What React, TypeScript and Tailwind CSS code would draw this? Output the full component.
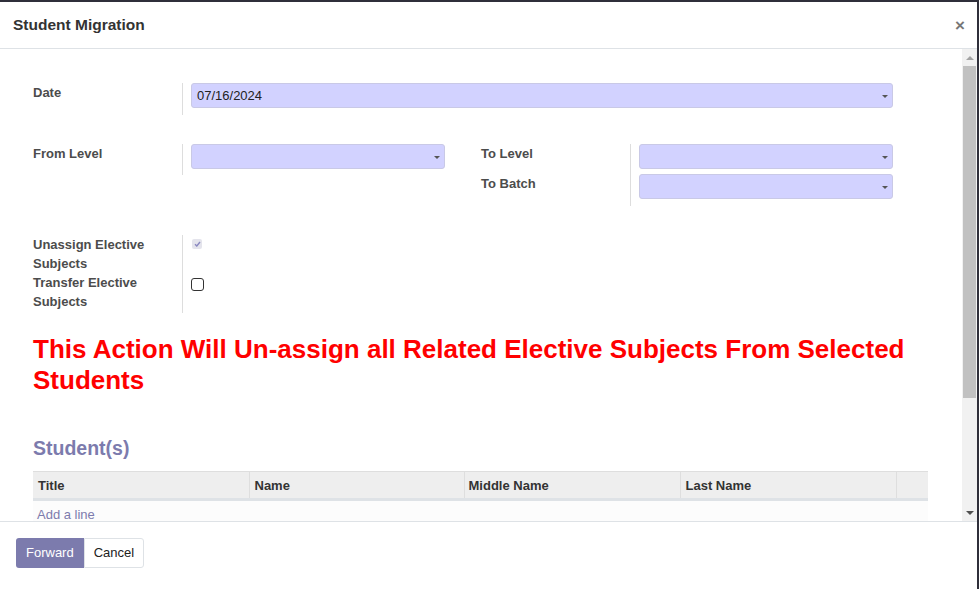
import type { ReactNode } from "react";

const font = { fontFamily: '"Liberation Sans", Arial, sans-serif' };

function Field({ children, width }: { children?: ReactNode; width: string }) {
  return (
    <div className={`relative flex h-[25px] items-center rounded-[3px] border border-[#c9c9e6] bg-[#d2d2ff] pl-[5px] text-[13px] text-[#222] ${width}`}>
      {children}
      <span className="absolute right-[4px] top-[11px] h-0 w-0 border-x-[3px] border-t-[3px] border-x-transparent border-t-[#555]" />
    </div>
  );
}

function Label({ children }: { children: ReactNode }) {
  return <div className="text-[13px] font-bold leading-[19px] text-[#4c4c4c]">{children}</div>;
}

export default function App() {
  return (
    <div className="h-[589px] w-[979px] overflow-hidden bg-[#2f2f3a]" style={font}>
      <div className="mt-[2px] flex h-[587px] w-[977px] flex-col bg-white">
        <header className="flex h-[47px] shrink-0 items-center justify-between border-b border-[#dee2e6] pl-[13px] pr-[12px]">
          <h1 className="text-[15.5px] font-bold text-[#333]">Student Migration</h1>
          <span className="text-[17px] font-bold leading-none text-[#777]">×</span>
        </header>

        <div className="flex min-h-0 flex-1">
          <div className="flex-1 overflow-hidden pl-[33px] pr-[49px] pt-[34px]">
            <div className="flex">
              <div className="w-[149px]">
                <Label>Date</Label>
              </div>
              <div className="flex h-[32px] border-l border-[#ddd] pl-[8px]">
                <Field width="w-[702px]">07/16/2024</Field>
              </div>
            </div>

            <div className="mt-[29px] flex">
              <div className="w-[149px]">
                <Label>From Level</Label>
              </div>
              <div className="h-[31px] w-[299px] border-l border-[#ddd] pl-[8px]">
                <Field width="w-[254px]" />
              </div>
              <div className="w-[149px]">
                <Label>To Level</Label>
                <div className="mt-[11px]">
                  <Label>To Batch</Label>
                </div>
              </div>
              <div className="flex h-[62px] flex-col gap-[5px] border-l border-[#ddd] pl-[8px]">
                <Field width="w-[254px]" />
                <Field width="w-[254px]" />
              </div>
            </div>

            <div className="mt-[29px] flex">
              <div className="w-[149px]">
                <Label>
                  Unassign Elective
                  <br />
                  Subjects
                </Label>
                <Label>
                  Transfer Elective
                  <br />
                  Subjects
                </Label>
              </div>
              <div className="h-[78px] border-l border-[#ddd] pl-[9px] pt-[4px]">
                <div className="flex h-[10px] w-[10px] items-center justify-center rounded-[2px] bg-[#e4e4ec]">
                  <svg width="7" height="6" viewBox="0 0 7 6">
                    <path d="M1 3.2 L2.8 5 L6 1" fill="none" stroke="#8a88c0" strokeWidth="1.4" />
                  </svg>
                </div>
                <div className="ml-[-1px] mt-[29px] h-[13px] w-[13px] rounded-[3px] border-[1.5px] border-[#333] bg-white" />
              </div>
            </div>

            <p className="mt-[21px] text-[26px] font-bold leading-[31px] text-[#ff0000]">
              This Action Will Un-assign all Related Elective Subjects From Selected Students
            </p>

            <h2 className="mt-[38px] text-[19.5px] font-bold text-[#7c7bad]">Student(s)</h2>

            <table className="mt-[8px] w-[895px] border-collapse text-[13px]">
              <thead>
                <tr className="h-[28px] border-t border-b-[3px] border-t-[#dedede] border-b-[#dee2e6] bg-[#eeeeee] text-left font-bold text-[#333]">
                  <th className="w-[216px] pl-[5px]">Title</th>
                  <th className="w-[215px] border-l border-[#dedede] pl-[5px]">Name</th>
                  <th className="w-[216px] border-l border-[#dedede] pl-[4px]">Middle Name</th>
                  <th className="w-[216px] border-l border-[#dedede] pl-[5px]">Last Name</th>
                  <th className="border-l border-[#dedede]" />
                </tr>
              </thead>
              <tbody>
                <tr className="h-[22px] bg-[#fcfcfc]">
                  <td colSpan={5} className="pl-[4px] pt-[4px] text-[#7c7bad]">
                    Add a line
                  </td>
                </tr>
              </tbody>
            </table>
          </div>

          <div className="flex w-[15px] shrink-0 flex-col bg-[#f1f1f1]">
            <div className="flex h-[17px] items-center justify-center">
              <span className="h-0 w-0 border-x-[4px] border-b-[4px] border-x-transparent border-b-[#a3a3a3]" />
            </div>
            <div className="mx-[1px] h-[332px] bg-[#c1c1c1]" />
            <div className="flex-1" />
            <div className="flex h-[17px] items-center justify-center">
              <span className="h-0 w-0 border-x-[4px] border-t-[4px] border-x-transparent border-t-[#505050]" />
            </div>
          </div>
        </div>

        <footer className="flex h-[68px] shrink-0 items-start border-t border-[#dee2e6] pl-[16px] pt-[16px]">
          <button className="h-[30px] rounded-l-[3px] bg-[#7c7bad] px-[10px] text-[13px] text-white">Forward</button>
          <button className="h-[30px] rounded-r-[3px] border border-[#dee2e6] bg-white px-[9px] text-[13px] text-[#222]">Cancel</button>
        </footer>
      </div>
    </div>
  );
}
